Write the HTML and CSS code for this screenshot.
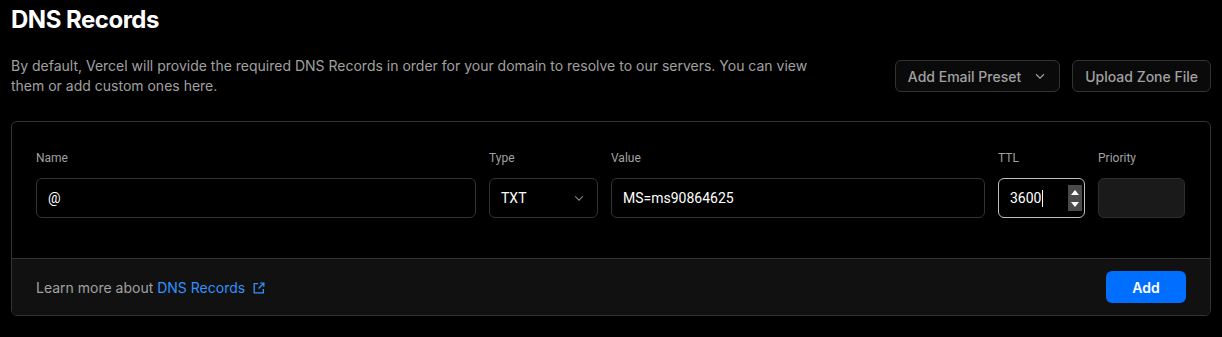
FILE: index.html
```html
<!DOCTYPE html>
<html lang="en">
<head>
    <meta charset="UTF-8">
    <meta name="viewport" content="width=device-width, initial-scale=1.0">
    <title>DNS Records</title>
    <link rel="stylesheet" href="styles.css">
</head>
<body>

<div class="dns-section">
    <h2 class="dns-title">DNS Records</h2>

    <div class="dns-intro">
        <p class="dns-desc">By default, Vercel will provide the required DNS Records in order for your domain to resolve to our servers. You can view them or add custom ones here.</p>
        <div class="dns-actions">
            <button class="ghost-btn">Add Email Preset
                <svg class="chevron" width="14" height="14" viewBox="0 0 16 16" fill="none" stroke="currentColor" stroke-width="1.4"><path d="M3.5 6l4.5 4.5L12.5 6"/></svg>
            </button>
            <button class="ghost-btn">Upload Zone File</button>
        </div>
    </div>

    <div class="dns-card">
        <div class="dns-form">
            <div class="field field-name">
                <label>Name</label>
                <div class="box">@</div>
            </div>
            <div class="field field-type">
                <label>Type</label>
                <div class="box select">TXT
                    <svg class="chevron dim" width="14" height="14" viewBox="0 0 16 16" fill="none" stroke="currentColor" stroke-width="1.2"><path d="M3.5 6l4.5 4.5L12.5 6"/></svg>
                </div>
            </div>
            <div class="field field-value">
                <label>Value</label>
                <div class="box">MS=ms90864625</div>
            </div>
            <div class="field field-ttl">
                <label>TTL</label>
                <div class="box focused">3600<span class="caret"></span>
                    <span class="spinner">
                        <svg width="8" height="6" viewBox="0 0 8 6"><path d="M0 5h8L4 0z" fill="#fff"/></svg>
                        <svg width="8" height="6" viewBox="0 0 8 6"><path d="M0 1h8L4 6z" fill="#fff"/></svg>
                    </span>
                </div>
            </div>
            <div class="field field-priority">
                <label>Priority</label>
                <div class="box disabled"></div>
            </div>
        </div>

        <div class="dns-footer">
            <span class="learn">Learn more about <a href="#">DNS Records
                <svg width="14" height="14" viewBox="0 0 16 16" fill="none" stroke="currentColor" stroke-width="1.5"><path d="M13 9v4.5H2.5V3H7"/><path d="M9.5 2.5H13.5V6.5"/><path d="M13.5 2.5L7.5 8.5"/></svg>
            </a></span>
            <button class="add-btn">Add</button>
        </div>
    </div>
</div>

</body>
</html>
```

FILE: styles.css
```css
body {
    margin: 0;
    background-color: #000;
    font-family: Inter, 'Noto Sans', sans-serif;
    color: #ededed;
}

.dns-section {
    padding: 4px 11px 0 11px;
    width: 1200px;
}

.dns-title {
    margin: 0;
    font-size: 24px;
    font-weight: 700;
    letter-spacing: -0.5px;
    line-height: 32px;
    color: #fff;
}

.dns-intro {
    display: flex;
    justify-content: space-between;
    align-items: flex-start;
    margin-top: 20px;
}

.dns-desc {
    margin: 0;
    width: 810px;
    font-size: 14px;
    line-height: 20px;
    color: #a1a1a1;
}

.dns-actions {
    display: flex;
    gap: 12px;
    margin-top: 4px;
}

.ghost-btn {
    display: flex;
    align-items: center;
    gap: 12px;
    height: 32px;
    padding: 0 12px;
    background-color: #0a0a0a;
    border: 1px solid #333;
    border-radius: 6px;
    color: #a1a1a1;
    font-family: Inter, sans-serif;
    font-size: 14px;
    font-weight: 500;
    cursor: pointer;
}

.chevron {
    color: #a1a1a1;
}

.chevron.dim {
    color: #8f8f8f;
}

.dns-card {
    margin-top: 25px;
    border: 1px solid #333;
    border-radius: 6px;
    overflow: hidden;
    background-color: #000;
}

.dns-form {
    display: flex;
    gap: 13px;
    padding: 28px 24px 40px 24px;
    border-bottom: 1px solid #333;
}

.field {
    display: flex;
    flex-direction: column;
}

.field label {
    font-family: Roboto, Arial, sans-serif;
    font-size: 12px;
    line-height: 16px;
    color: #a1a1a1;
    margin-bottom: 12px;
}

.field-name { width: 440px; }
.field-type { width: 109px; }
.field-value { width: 374px; }
.field-ttl { width: 87px; }
.field-priority { width: 87px; }

.box {
    position: relative;
    display: flex;
    align-items: center;
    height: 40px;
    box-sizing: border-box;
    padding: 0 11px;
    border: 1px solid #333;
    border-radius: 6px;
    background-color: #000;
    font-family: Roboto, Arial, sans-serif;
    font-size: 14px;
    color: #fff;
}

.box.select {
    justify-content: space-between;
}

.box.focused {
    border-color: #bdbdbd;
}

.box.disabled {
    background-color: #1a1a1a;
    border-color: #2e2e2e;
}

.caret {
    display: inline-block;
    width: 1px;
    height: 17px;
    background-color: #fff;
    margin-left: 1px;
}

.spinner {
    position: absolute;
    right: 2px;
    top: 6px;
    width: 14px;
    height: 26px;
    background-color: #4a4a4a;
    display: flex;
    flex-direction: column;
    align-items: center;
    justify-content: space-around;
    padding: 2px 0;
    box-sizing: border-box;
}

.spinner svg {
    display: block;
}

.dns-footer {
    display: flex;
    justify-content: space-between;
    align-items: center;
    height: 56px;
    padding: 0 24px;
    background-color: #111;
}

.learn {
    font-size: 14px;
    color: #a1a1a1;
}

.learn a {
    color: #3291ff;
    text-decoration: none;
}

.learn a svg {
    vertical-align: -2px;
    margin-left: 3px;
}

.add-btn {
    width: 80px;
    height: 32px;
    border: none;
    border-radius: 6px;
    background-color: #006efe;
    color: #fff;
    font-family: Inter, sans-serif;
    font-size: 14px;
    font-weight: 600;
    cursor: pointer;
}
```
